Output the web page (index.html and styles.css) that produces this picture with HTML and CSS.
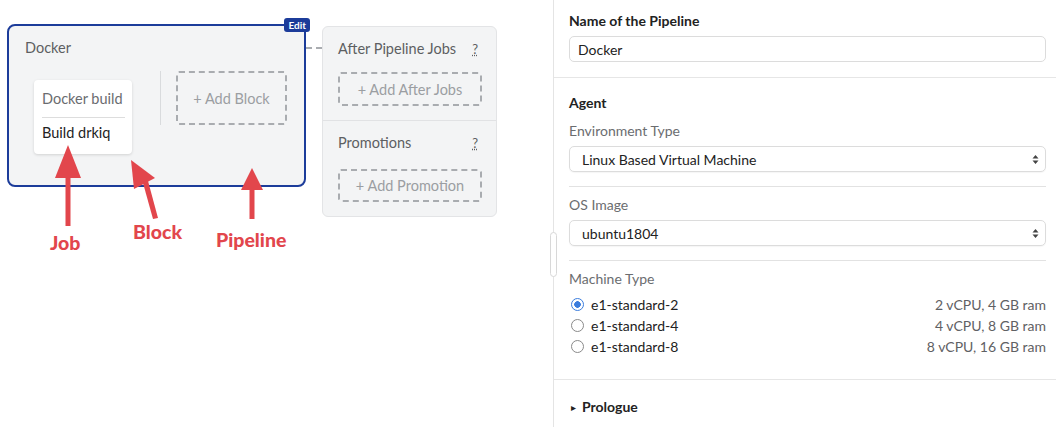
FILE: index.html
```html
<!DOCTYPE html>
<html>
<head>
<meta charset="utf-8">
<link rel="stylesheet" href="styles.css">
</head>
<body>
<div class="app">
  <div class="canvas">
    <div class="pipeline">
      <span class="edit">Edit</span>
      <div class="pl-title">Docker</div>
      <div class="blocks">
        <div class="block">
          <div class="job-card">
            <div class="block-name">Docker build</div>
            <div class="job-name">Build drkiq</div>
          </div>
        </div>
        <div class="block-sep"></div>
        <div class="add-block dashed">+ Add Block</div>
      </div>
    </div>
    <div class="connector"></div>
    <div class="after">
      <div class="after-sec">
        <div class="after-head"><span>After Pipeline Jobs</span><span class="q">?</span></div>
        <div class="dashed add-after">+ Add After Jobs</div>
      </div>
      <div class="after-sec promos">
        <div class="after-head"><span>Promotions</span><span class="q">?</span></div>
        <div class="dashed add-promo">+ Add Promotion</div>
      </div>
    </div>
    <svg class="annot" width="320" height="260" viewBox="0 0 320 260">
      <g fill="#e2464c" stroke="none">
        <rect x="65.5" y="174" width="5" height="52"/>
        <polygon points="68,145 55,178 81,178"/>
        <polygon points="131,160 134,189 155,178"/>
        <polygon points="143,183 148,181 158,218 153,219"/>
        <rect x="249.5" y="186" width="5" height="33"/>
        <polygon points="252,168 241,190 263,190"/>
      </g>
      <text x="50" y="250" class="lbl">Job</text>
      <text x="133" y="239" class="lbl">Block</text>
      <text x="216" y="247" class="lbl">Pipeline</text>
    </svg>
  </div>
  <div class="panel">
    <span class="handle"></span>
    <section class="sec first">
      <div class="h">Name of the Pipeline</div>
      <div class="field">Docker</div>
    </section>
    <section class="sec agent">
      <div class="h">Agent</div>
      <div class="lab">Environment Type</div>
      <div class="field sel">Linux Based Virtual Machine<svg class="updown" width="7" height="11" viewBox="0 0 7 11"><path d="M3.5 1 L6.5 4.5 H0.5 Z M3.5 10 L6.5 6.5 H0.5 Z" fill="#444"/></svg></div>
      <div class="divider"></div>
      <div class="lab">OS Image</div>
      <div class="field sel">ubuntu1804<svg class="updown" width="7" height="11" viewBox="0 0 7 11"><path d="M3.5 1 L6.5 4.5 H0.5 Z M3.5 10 L6.5 6.5 H0.5 Z" fill="#444"/></svg></div>
      <div class="divider"></div>
      <div class="lab">Machine Type</div>
      <div class="radios">
        <div class="radio on"><span class="dot"></span><span class="rname">e1-standard-2</span><span class="spec">2 vCPU, 4 GB ram</span></div>
        <div class="radio"><span class="dot"></span><span class="rname">e1-standard-4</span><span class="spec">4 vCPU, 8 GB ram</span></div>
        <div class="radio"><span class="dot"></span><span class="rname">e1-standard-8</span><span class="spec">8 vCPU, 16 GB ram</span></div>
      </div>
    </section>
    <section class="sec prologue">
      <span class="tri">&#9656;</span><span class="h">Prologue</span>
    </section>
  </div>
</div>
</body>
</html>
```
FILE: styles.css
```css
* { box-sizing: border-box; }
html, body { margin: 0; padding: 0; background: #fff; }
body {
  font-family: Lato, "Noto Sans", sans-serif;
  font-size: 14px;
  color: #222;
  white-space: nowrap;
}
.app { display: flex; width: 1056px; height: 427px; overflow: hidden; }

/* canvas */
.canvas {
  position: relative;
  width: 553px;
  flex: none;
  display: flex;
  align-items: flex-start;
  padding: 24px 0 0 7px;
}
.pipeline {
  position: relative;
  width: 299px;
  height: 163px;
  border: 2.5px solid #1c3c9a;
  border-radius: 8px;
  background: #f3f4f5;
  padding: 12px 0 0 16px;
}
.edit {
  position: absolute;
  right: -6px;
  top: -8px;
  background: #1c3c9a;
  color: #fff;
  font-size: 10px;
  font-weight: 700;
  line-height: 14px;
  padding: 0 4px;
  border-radius: 3px;
}
.pl-title { color: #5d5f62; font-size: 14.5px; line-height: 20px; }
.blocks { display: flex; align-items: flex-start; margin-top: 13px; }
.block { padding: 9px 0 0 9px; width: 135px; }
.job-card {
  width: 98px;
  height: 74px;
  background: #fff;
  border-radius: 4px;
  box-shadow: 0 1px 3px rgba(0,0,0,0.14);
  padding: 0 7px 0 8px;
}
.block-name {
  color: #6a6c70;
  font-size: 14.5px;
  line-height: 18px;
  padding: 10px 0 9px;
  border-bottom: 1px solid #ddd;
}
.job-name { color: #222; font-size: 14.5px; line-height: 18px; padding-top: 6px; }
.block-sep { width: 1px; height: 54px; background: #d9dbdd; margin-left: 0; }
.dashed {
  border: 2px dashed #a9acb0;
  border-radius: 3px;
  color: #9b9ea2;
  display: flex;
  align-items: center;
  justify-content: center;
  font-size: 14.5px;
}
.add-block { width: 111px; height: 54px; margin-left: 15px; }

.connector {
  width: 16px;
  margin-top: 23px;
  border-top: 2px dashed #a9acb0;
}
.after {
  width: 175px;
  height: 191px;
  margin-top: 2px;
  background: #f3f4f5;
  border: 1px solid #e3e4e6;
  border-radius: 6px;
  display: flex;
  flex-direction: column;
}
.after-sec { padding: 12px 14px 0 15px; }
.after-sec:first-child { height: 94px; border-bottom: 1px solid #e1e2e4; }
.after-head {
  display: flex;
  justify-content: space-between;
  color: #5d5f62;
  font-size: 14.5px;
  line-height: 20px;
}
.q { text-decoration: underline dotted; font-size: 13px; padding-right: 4px; }
.add-after { height: 34px; margin-top: 13px; }
.promos { padding-top: 12px; }
.add-promo { height: 33px; margin-top: 16px; }

.annot { position: absolute; left: 0; top: 0; }
.lbl { fill: #e2464c; font-family: Lato, sans-serif; font-weight: 900; font-size: 19.5px; }

/* panel */
.panel {
  position: relative;
  flex: 1;
  border-left: 1px solid #e4e4e4;
}
.handle {
  position: absolute;
  left: -4px;
  top: 232px;
  width: 7px;
  height: 45px;
  border: 1px solid #d8d8d8;
  border-radius: 4px;
  background: #fff;
}
.sec { padding: 0 10px 0 15px; }
.first { padding-top: 11px; height: 78px; border-bottom: 1px solid #e6e6e6; }
.h { font-weight: 700; color: #222; line-height: 20px; }
.field {
  margin-top: 5px;
  height: 26px;
  border: 1px solid #dcdcdc;
  border-radius: 5px;
  padding: 0 8px;
  display: flex;
  align-items: center;
  color: #222;
}
.sel { padding-left: 12px; position: relative; box-shadow: 0 1px 1px rgba(0,0,0,0.04); }
.updown { position: absolute; right: 6px; top: 7px; }
.agent { padding-top: 15px; height: 302px; border-bottom: 1px solid #e6e6e6; }
.lab { color: #6b6d70; line-height: 20px; margin-top: 8px; }
.divider { height: 1px; background: #e2e2e2; margin-top: 14px; }
.radios { margin-top: 5px; }
.radio { display: flex; align-items: center; height: 21px; color: #222; }
.dot {
  width: 13px; height: 13px;
  border-radius: 50%;
  border: 1.5px solid #8a8a8a;
  margin: 0 7px 0 2px;
  background: #fff;
}
.radio.on .dot {
  border: 1.5px solid #3b7ddd;
  background: radial-gradient(circle, #3b7ddd 0 3px, #fff 3.6px);
}
.rname { flex: 1; }
.spec { color: #5f6164; }
.prologue { padding-top: 17px; display: flex; align-items: center; }
.tri { font-size: 10px; color: #222; width: 11px; margin-left: 2px; }
```
